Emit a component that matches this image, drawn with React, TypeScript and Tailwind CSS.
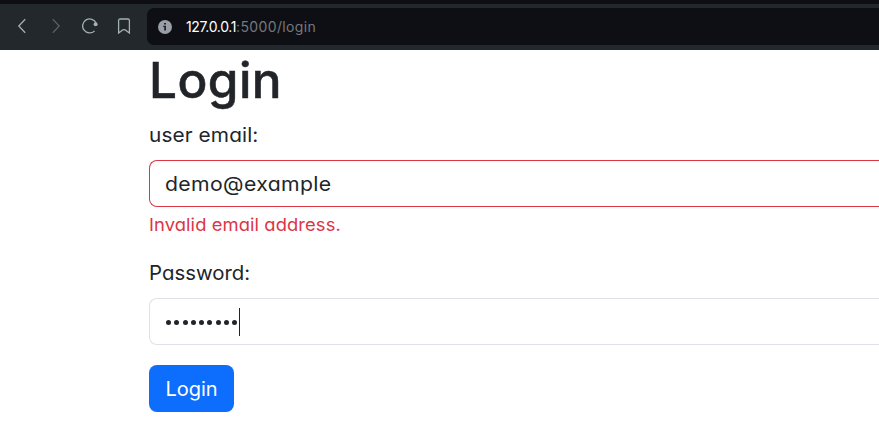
function Toolbar() {
  return (
    <header className="h-[50px] border-t-4 border-[#0e0f14] bg-[#22282b] flex items-start">
      <nav className="flex h-[44px] w-[147px] shrink-0 items-center text-[#a3b0b2]">
        <svg className="ml-[14px] size-4" viewBox="0 0 16 16" fill="none" stroke="currentColor" strokeWidth="1.3"><path d="M11.2 1.2 4.8 8l6.4 6.8" /></svg>
        <svg className="ml-[18px] size-4 text-[#566063]" viewBox="0 0 16 16" fill="none" stroke="currentColor" strokeWidth="1.3"><path d="M4.8 1.2 11.2 8l-6.4 6.8" /></svg>
        <svg className="ml-[18px] size-4" viewBox="0 0 16 16" fill="none" stroke="currentColor" strokeWidth="1.3"><path d="M14.1 5.2A7 7 0 1 0 12.6 12.9" /><circle cx="13.6" cy="6.2" r="2" fill="currentColor" stroke="none" /></svg>
        <svg className="ml-[18px] size-4" viewBox="0 0 16 16" fill="none" stroke="currentColor" strokeWidth="1.3"><path d="M2.6 15V2.6Q2.6 1 4.2 1h7.6q1.6 0 1.6 1.6V15L10 12.4q-2-1.4-4 0Z" /></svg>
      </nav>
      <div className="mt-1 flex h-[37px] flex-1 items-center rounded-l-[7px] bg-[#0e0f14] pl-[11px]">
        <svg className="size-[14px]" viewBox="0 0 14 14"><circle cx="7" cy="7" r="7" fill="#9a9ea6" /><path d="M6 3h2v1.6H6zM5.2 5.8H8v4.6H6.2V7.1h-1z" fill="#22252b" /></svg>
        <span className="ml-[14px] whitespace-nowrap text-[14px] leading-5 text-[#75787c]">
          <span className="tracking-[-0.35px] text-white">127.0.0.1</span><span className="tracking-[0.35px]">:5000/login</span>
        </span>
      </div>
    </header>
  );
}

export default function App() {
  return (
    <div className="h-[438px] overflow-hidden bg-white font-['Inter',sans-serif] text-[#212529] [font-feature-settings:'cv11','calt'_0,'ss03']">
      <Toolbar />
      <main className="flex flex-col items-start pl-[149px] whitespace-nowrap">
        <h1 className="h-[60px] text-[49.5px] font-medium leading-[60px] tracking-[0.45px] [-webkit-text-stroke:0.5px_#212529]">Login</h1>
        <label className="mt-[10px] h-[30px] origin-left scale-x-[1.04] text-[20px] leading-[30px] tracking-[0.1px]">user email:</label>
        <div className="mt-[10px] flex h-[47px] w-full items-center rounded-l-lg border border-r-0 border-[#dc3545] pl-[15px] text-[20px]">
          <span className="origin-left scale-x-[1.06] pt-px tracking-[0.35px]">demo@example</span>
        </div>
        <p className="mt-[5px] h-[26px] origin-left scale-x-[1.05] text-[17.5px] leading-[26px] tracking-[0.08px] text-[#dc3545]">Invalid email address.</p>
        <label className="mt-[20px] h-[30px] origin-left scale-x-[1.02] text-[20px] leading-[30px]">Password:</label>
        <div className="mt-[10px] flex h-[47px] w-full items-center rounded-l-lg border border-r-0 border-[#dee2e6] pl-[16px]">
          <span className="flex gap-[3.25px] pt-[2px]">
            {Array.from({ length: 9 }, (_, i) => <i key={i} className="size-[5px] rounded-full bg-[#212529]" />)}
          </span>
          <span className="ml-[2px] h-7 w-px bg-[#212529]" />
        </div>
        <button className="mt-5 flex h-[47px] w-[85px] items-center justify-center rounded-lg bg-[#0d6efd] pt-px text-[20px] text-white">Login</button>
      </main>
    </div>
  );
}
